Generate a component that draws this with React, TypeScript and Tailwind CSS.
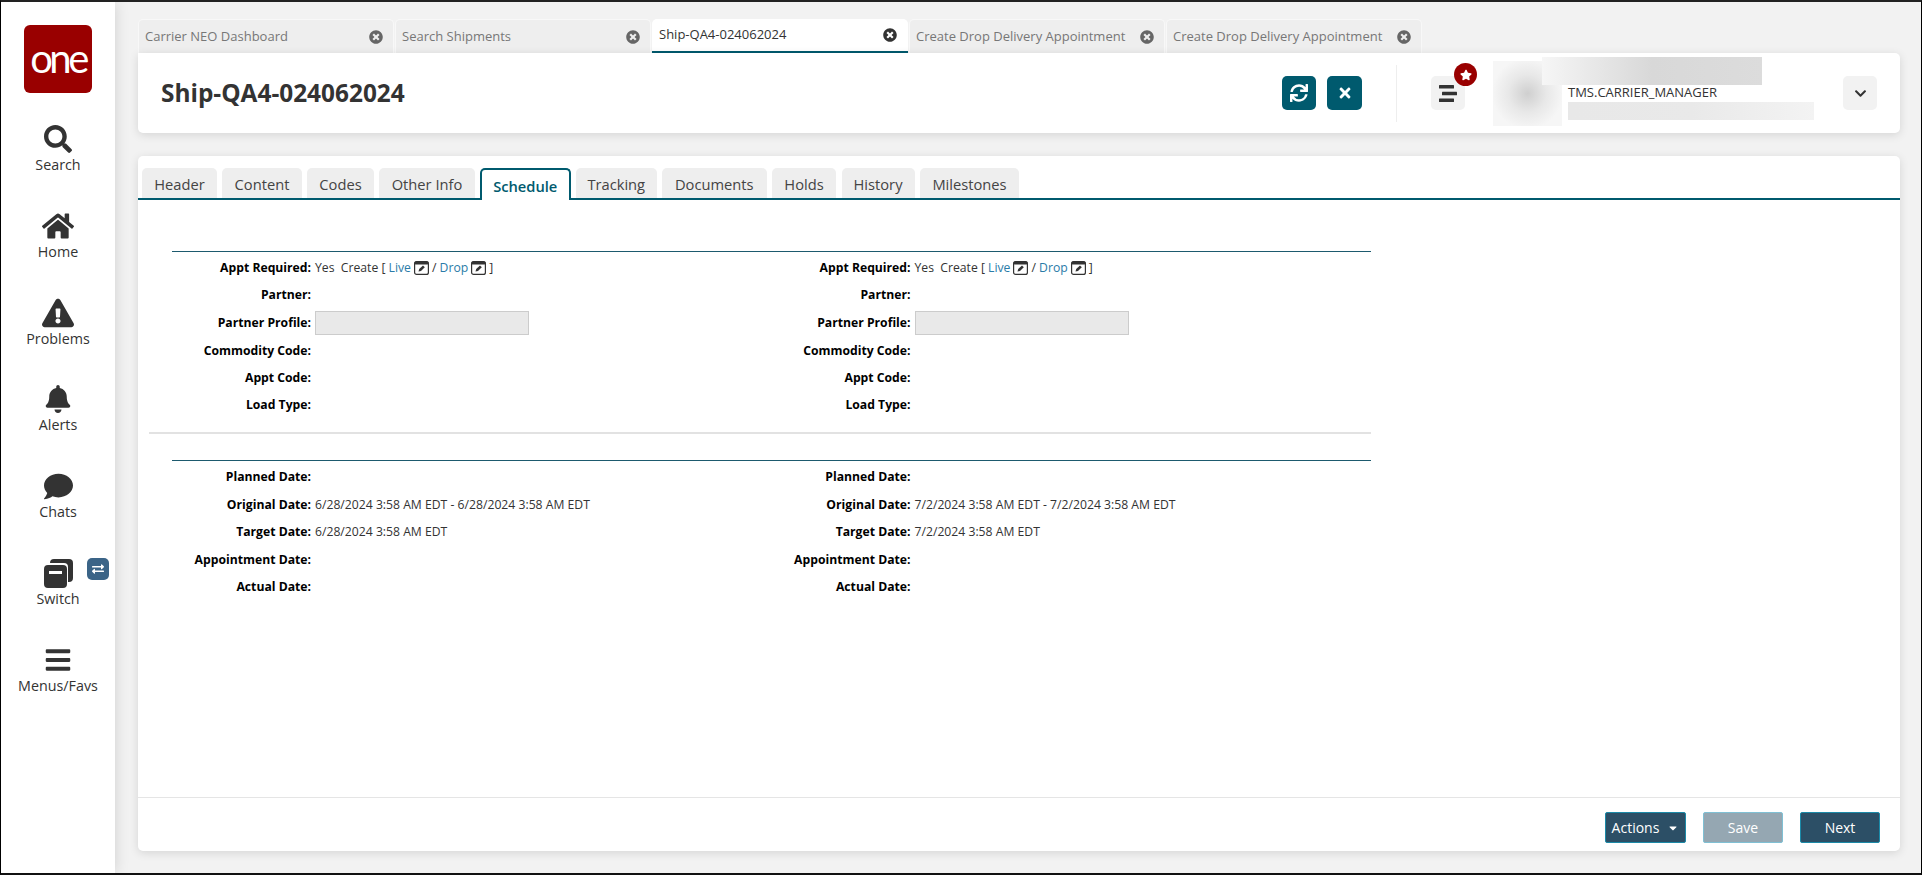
import React from "react";
import {
  FaSearch,
  FaHome,
  FaExclamationTriangle,
  FaBell,
  FaComment,
  FaBars,
  FaSync,
  FaTimes,
  FaStar,
  FaExchangeAlt,
  FaTimesCircle,
  FaChevronDown,
  FaCaretDown,
} from "react-icons/fa";

const topTabs = [
  { label: "Carrier NEO Dashboard", active: false },
  { label: "Search Shipments", active: false },
  { label: "Ship-QA4-024062024", active: true },
  { label: "Create Drop Delivery Appointment", active: false },
  { label: "Create Drop Delivery Appointment", active: false },
];

const innerTabs = [
  { label: "Header", w: "w-[75px]" },
  { label: "Content", w: "w-[79.5px]" },
  { label: "Codes", w: "w-[67px]" },
  { label: "Other Info", w: "w-[95.5px]" },
  { label: "Schedule", w: "w-[90.5px]", active: true },
  { label: "Tracking", w: "w-[81px]" },
  { label: "Documents", w: "w-[104.5px]" },
  { label: "Holds", w: "w-[64.5px]" },
  { label: "History", w: "w-[73px]" },
  { label: "Milestones", w: "w-[99.5px]" },
];

function SwitchIcon() {
  return (
    <svg width="29" height="29" viewBox="0 0 29 29" fill="#333333">
      <path d="M10 0h15a4 4 0 0 1 4 4v15a4 4 0 0 1-4 4h-1V8a4 4 0 0 0-4-4H6a4 4 0 0 1 4-4z" />
      <path
        fillRule="evenodd"
        d="M4 6h15a4 4 0 0 1 4 4v15a4 4 0 0 1-4 4H4a4 4 0 0 1-4-4V10a4 4 0 0 1 4-4zm1 6v3h13v-3H5z"
      />
    </svg>
  );
}

function AlignIcon() {
  return (
    <svg width="18" height="17" viewBox="0 0 18 17" fill="#333333">
      <rect x="0" y="0" width="15" height="3.4" rx="0.5" />
      <rect x="3" y="6.8" width="15" height="3.4" rx="0.5" />
      <rect x="0" y="13.6" width="15" height="3.4" rx="0.5" />
    </svg>
  );
}

function CalendarEdit() {
  return (
    <svg width="15" height="14" viewBox="0 0 15 14" className="mx-[3px] inline-block align-[-3px]">
      <rect x="0.6" y="0.6" width="13.8" height="12.8" rx="2" fill="#ffffff" stroke="#333333" strokeWidth="1.2" />
      <rect x="0.6" y="0.6" width="13.8" height="3" rx="1" fill="#333333" />
      <path d="M4.5 10.5l0.7-2.4 3.8-3.6 1.8 1.8-3.8 3.6z" fill="#333333" />
    </svg>
  );
}

function SideItem({
  icon,
  label,
  h,
  badge,
}: {
  icon: React.ReactNode;
  label: string;
  h: string;
  badge?: boolean;
}) {
  return (
    <div className={`relative flex w-full flex-col items-center ${h}`}>
      <div className="flex h-[32px] items-center justify-center text-[#333333]">{icon}</div>
      <div className="text-[14.3px] leading-[20px] text-[#333333]">{label}</div>
      {badge && (
        <div className="absolute left-[86px] top-[1px] flex h-[22px] w-[22px] items-center justify-center rounded-[5px] bg-[#3b6487] text-white">
          <FaExchangeAlt size={12} />
        </div>
      )}
    </div>
  );
}

function Row({ label, children, h }: { label: string; children?: React.ReactNode; h: string }) {
  return (
    <div className={`flex items-center ${h}`}>
      <div className="w-[139px] shrink-0 whitespace-nowrap text-right text-[12.2px] font-bold text-black">{label}</div>
      <div className="ml-[1px] flex items-center whitespace-nowrap pl-[3px] text-[12.2px] text-[#333333]">{children}</div>
    </div>
  );
}

function ApptColumn() {
  return (
    <div className="w-[599.5px] shrink-0 border-t border-[#1d5a6e] pt-[3px]">
      <Row label="Appt Required:" h="h-[27px]">
        <span>
          Yes&nbsp;&nbsp;Create [ <span className="text-[#2a7ba8]">Live</span>
          <CalendarEdit />/ <span className="text-[#2a7ba8]">Drop</span>
          <CalendarEdit />]
        </span>
      </Row>
      <Row label="Partner:" h="h-[27px]" />
      <Row label="Partner Profile:" h="h-[28px]">
        <div className="h-[24px] w-[214px] border border-[#cccccc] bg-[#e9e9e9]" />
      </Row>
      <Row label="Commodity Code:" h="h-[28px]" />
      <Row label="Appt Code:" h="h-[27px]" />
      <Row label="Load Type:" h="h-[27px]" />
    </div>
  );
}

function DateColumn({ original, target }: { original: string; target: string }) {
  return (
    <div className="w-[599.5px] shrink-0 border-t border-[#1d5a6e] pt-[3px]">
      <Row label="Planned Date:" h="h-[27px]" />
      <Row label="Original Date:" h="h-[28px]">
        {original}
      </Row>
      <Row label="Target Date:" h="h-[27px]">
        {target}
      </Row>
      <Row label="Appointment Date:" h="h-[28px]" />
      <Row label="Actual Date:" h="h-[27px]" />
    </div>
  );
}

export default function App() {
  return (
    <div
      className="flex h-[875px] w-[1922px] overflow-hidden border-x border-b-2 border-t-2 border-x-black border-b-[#111111] border-t-[#222222] bg-[#f2f2f2] text-[#333333]"
      style={{ fontFamily: '"Open Sans", sans-serif' }}
    >
      <aside className="z-10 flex h-full w-[114px] shrink-0 flex-col items-center bg-white pt-[23px] shadow-[0_0_14px_rgba(0,0,0,0.14)]">
        <div className="mb-[30px] flex h-[68px] w-[68px] items-center justify-center rounded-[6px] bg-[#990000]">
          <span className="pb-[3px] text-[40px] leading-none tracking-[-3.5px] text-white" style={{ fontFamily: '"Lato", sans-serif' }}>
            one
          </span>
        </div>
        <SideItem icon={<FaSearch size={28} />} label="Search" h="h-[87px]" />
        <SideItem icon={<FaHome size={32} />} label="Home" h="h-[87px]" />
        <SideItem icon={<FaExclamationTriangle size={32} />} label="Problems" h="h-[86px]" />
        <SideItem icon={<FaBell size={28} />} label="Alerts" h="h-[87px]" />
        <SideItem icon={<FaComment size={29} />} label="Chats" h="h-[87px]" />
        <SideItem icon={<SwitchIcon />} label="Switch" h="h-[87px]" badge />
        <SideItem icon={<FaBars size={28} />} label="Menus/Favs" h="h-[87px]" />
      </aside>

      <main className="flex min-w-0 flex-1 flex-col pl-[23px] pr-[21px] pt-[17px]">
        <div className="flex h-[34px] shrink-0 gap-[1px]">
          {topTabs.map((t, i) => (
            <div
              key={i}
              className={
                t.active
                  ? "flex w-[256px] items-center justify-between rounded-t-[5px] border-b-2 border-[#005a6e] bg-white pl-[7px] pr-[11px] text-[13px] text-[#333333]"
                  : "flex w-[256px] items-center justify-between rounded-t-[5px] border border-b-0 border-[#f8f8f8] bg-[#eeeeee] pl-[6px] pr-[10px] text-[13px] text-[#777777]"
              }
            >
              <span className="whitespace-nowrap">{t.label}</span>
              <FaTimesCircle size={14} className={t.active ? "text-[#333333]" : "text-[#666666]"} />
            </div>
          ))}
        </div>

        <header className="flex h-[80px] shrink-0 items-center rounded-b-[5px] rounded-tr-[5px] bg-white pl-[23px] pr-[23px] shadow-[0_2px_10px_rgba(0,0,0,0.12)]">
          <h1 className="flex-1 text-[24.4px] font-bold leading-none text-[#333333]">Ship-QA4-024062024</h1>
          <div className="flex items-center gap-[11px]">
            <button className="flex h-[34px] w-[34px] items-center justify-center rounded-[5px] bg-[#005a6e] text-white">
              <FaSync size={18} />
            </button>
            <button className="flex h-[34px] w-[35px] items-center justify-center rounded-[5px] bg-[#005a6e] text-white">
              <FaTimes size={16} />
            </button>
          </div>
          <div className="ml-[34px] h-[57px] w-px bg-[#eeeeee]" />
          <div className="relative ml-[34px] flex h-[34px] w-[34px] items-center justify-center rounded-[5px] bg-[#f2f2f2]">
            <AlignIcon />
            <div className="absolute -right-[12px] -top-[13px] flex h-[23px] w-[23px] items-center justify-center rounded-full bg-[#990000] text-white">
              <FaStar size={12} />
            </div>
          </div>
          <div className="ml-[28px] h-[65px] w-[69px] shrink-0 bg-[radial-gradient(circle,#cfcfcf_0%,#e8e8e8_40%,#f6f6f6_75%)]" />
          <div className="mb-[9px] ml-[6px] flex w-[246px] shrink-0 flex-col">
            <div className="-ml-[26px] h-[28px] w-[220px] bg-gradient-to-r from-[#f6f6f6] via-[#d8d8d8] to-[#dcdcdc]" />
            <div className="h-[17px] whitespace-nowrap text-[13px] leading-[14px] text-[#333333]">TMS.CARRIER_MANAGER</div>
            <div className="h-[18px] w-[246px] bg-gradient-to-r from-[#e8e8e8] via-[#e9e9e9] to-[#f3f3f3]" />
          </div>
          <button className="ml-[29px] flex h-[34px] w-[34px] shrink-0 items-center justify-center rounded-[5px] bg-[#f2f2f2] text-[#333333]">
            <FaChevronDown size={13} />
          </button>
        </header>

        <section className="mb-[22px] mt-[23px] flex min-h-0 flex-1 flex-col rounded-[5px] bg-white shadow-[0_2px_10px_rgba(0,0,0,0.12)]">
          <div className="mt-[12px] flex h-[32px] shrink-0 items-end gap-[5.25px] border-b-2 border-[#005a6e] pl-[4px]">
            {innerTabs.map((t) =>
              t.active ? (
                <div
                  key={t.label}
                  className={`-mb-[2px] flex h-[32px] shrink-0 items-center justify-center rounded-t-[5px] border-x-2 border-t-2 border-[#005a6e] bg-white pt-[3px] text-[14.7px] font-semibold text-[#005a6e] ${t.w}`}
                >
                  {t.label}
                </div>
              ) : (
                <div
                  key={t.label}
                  className={`flex h-[30px] shrink-0 items-center justify-center rounded-t-[5px] bg-[#eeeeee] pt-[3px] text-[14.7px] text-[#444444] ${t.w}`}
                >
                  {t.label}
                </div>
              ),
            )}
          </div>

          <div className="flex-1 pl-[11px] pt-[51px]">
            <div className="w-[1222px]">
              <div className="flex pl-[23px]">
                <ApptColumn />
                <ApptColumn />
              </div>
              <div className="mt-[13px] h-[2px] bg-[#e2e2e2]" />
              <div className="mt-[26px] flex pl-[23px]">
                <DateColumn original="6/28/2024 3:58 AM EDT - 6/28/2024 3:58 AM EDT" target="6/28/2024 3:58 AM EDT" />
                <DateColumn original="7/2/2024 3:58 AM EDT - 7/2/2024 3:58 AM EDT" target="7/2/2024 3:58 AM EDT" />
              </div>
            </div>
          </div>

          <footer className="flex h-[54px] shrink-0 items-start justify-end gap-[17px] border-t border-[#e5e5e5] pr-[20px] pt-[14px]">
            <button className="flex h-[31px] w-[81px] items-center justify-center gap-[8px] rounded-[2px] border border-[#1b8aa8] bg-[#2c4f66] text-[14px] text-white">
              Actions
              <FaCaretDown size={12} />
            </button>
            <button className="h-[31px] w-[80px] rounded-[2px] border border-[#7fc0d4] bg-[#95a7b2] text-[14px] text-white">Save</button>
            <button className="h-[31px] w-[80px] rounded-[2px] border border-[#1b8aa8] bg-[#2c4f66] text-[14px] text-white">Next</button>
          </footer>
        </section>
      </main>
    </div>
  );
}
